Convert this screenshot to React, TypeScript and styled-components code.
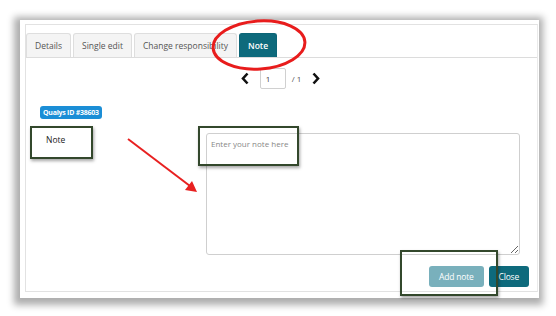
import styled, { createGlobalStyle } from 'styled-components';

const GlobalStyle = createGlobalStyle`
  html, body {
    margin: 0;
    padding: 0;
    background: #ffffff;
    font-family: "Open Sans", "Liberation Sans", sans-serif;
  }
`

const Page = styled.div`
  width: 556px;
  height: 316px;
  padding: 20px 17px 18px 20px;
  box-sizing: border-box;
  position: relative;
  overflow: hidden;
`
const Card = styled.div`
  height: 100%;
  background: #fff;
  box-shadow: -1px 2px 7px 5px rgba(0, 0, 0, 0.32);
  padding: 4px 1px 6px 5px;
  box-sizing: border-box;
`
const Panel = styled.div`
  height: 100%;
  border: 1px solid #e2e2e2;
  border-right-color: #eaeaea;
  box-sizing: border-box;
  display: flex;
  flex-direction: column;
`
const TabBar = styled.div`
  display: flex;
  gap: 2px;
  padding: 8px 0 0 0;
  border-bottom: 1px solid #dcdcdc;
`
const Tab = styled.div<{ $active?: boolean }>`
  height: 23px;
  padding: 0 8px;
  display: flex;
  align-items: center;
  font-size: 8.5px;
  border: 1px solid ${p => (p.$active ? '#0d6577' : '#dedede')};
  border-bottom: none;
  border-radius: 3px 3px 0 0;
  background: ${p => (p.$active ? '#0e6a7c' : '#f4f4f4')};
  color: ${p => (p.$active ? '#fff' : '#555')};
  font-weight: ${p => (p.$active ? 600 : 400)};
`
const Pager = styled.div`
  display: flex;
  justify-content: center;
  align-items: center;
  gap: 6px;
  margin-top: 10px;
  padding-right: 2px;
`
const Chevron = styled.svg`
  width: 10px;
  height: 13px;
  margin: 0 4px;
`
const PageInput = styled.div`
  width: 26px;
  height: 21px;
  border: 1px solid #d0d0d0;
  border-radius: 2px;
  box-sizing: border-box;
  font-size: 8px;
  color: #444;
  display: flex;
  align-items: center;
  padding-left: 5px;
`
const PageTotal = styled.span`
  font-size: 8px;
  color: #555;
`
const Body = styled.div`
  flex: 1;
  display: flex;
  flex-direction: column;
  padding: 17px 8px 0 14px;
`
const Badge = styled.span`
  align-self: flex-start;
  background: #1b8ed6;
  color: #fff;
  font-size: 7px;
  font-weight: 700;
  padding: 2px 3px;
  border-radius: 3px;
  letter-spacing: -0.25px;
`
const FieldRow = styled.div`
  display: flex;
  margin-top: 14px;
`
const FieldLabel = styled.div`
  width: 166px;
  flex-shrink: 0;
  padding: 1px 0 0 6px;
  box-sizing: border-box;
  font-size: 8.5px;
  color: #222;
`
const NoteArea = styled.textarea`
  width: 314px;
  height: 122px;
  box-sizing: border-box;
  border: 1px solid #cfcfcf;
  border-radius: 3px;
  padding: 4px 4px;
  font-family: "Open Sans", "Liberation Sans", sans-serif;
  font-size: 8px;
  resize: vertical;
  &::placeholder {
    color: #888;
  }
`
const Footer = styled.div`
  display: flex;
  justify-content: flex-end;
  gap: 5px;
  margin-top: 11px;
`
const Button = styled.button<{ $muted?: boolean }>`
  height: 21px;
  border: none;
  border-radius: 3px;
  padding: 0 10px;
  font-family: "Open Sans", "Liberation Sans", sans-serif;
  font-size: 8.5px;
  letter-spacing: -0.2px;
  color: #fff;
  background: ${p => (p.$muted ? '#79b0bc' : '#0e6a7c')};
`
const Highlight = styled.div`
  position: absolute;
  border: 2px solid #33482c;
  box-shadow: 1px 2px 3px rgba(0, 0, 0, 0.35);
  box-sizing: border-box;
`
const Overlay = styled.svg`
  position: absolute;
  left: 0;
  top: 0;
  pointer-events: none;
`

export default function App() {
  return (
    <Page>
      <GlobalStyle />
      <Card>
        <Panel>
          <TabBar>
            <Tab>Details</Tab>
            <Tab>Single edit</Tab>
            <Tab>Change responsibility</Tab>
            <Tab $active>Note</Tab>
          </TabBar>
          <Pager>
            <Chevron viewBox="0 0 10 13">
              <path d="M7.5 1.5 L3 6.5 L7.5 11.5" fill="none" stroke="#111" strokeWidth="2.6" />
            </Chevron>
            <PageInput>1</PageInput>
            <PageTotal>/ 1</PageTotal>
            <Chevron viewBox="0 0 10 13">
              <path d="M2.5 1.5 L7 6.5 L2.5 11.5" fill="none" stroke="#111" strokeWidth="2.6" />
            </Chevron>
          </Pager>
          <Body>
            <Badge>Qualys ID #38603</Badge>
            <FieldRow>
              <FieldLabel>Note</FieldLabel>
              <NoteArea placeholder="Enter your note here" />
            </FieldRow>
            <Footer>
              <Button $muted>Add note</Button>
              <Button>Close</Button>
            </Footer>
          </Body>
        </Panel>
      </Card>

      <Highlight style={{ left: 30, top: 126, width: 63, height: 33 }} />
      <Highlight style={{ left: 198, top: 126, width: 101, height: 40 }} />
      <Highlight style={{ left: 400, top: 250, width: 98, height: 46 }} />

      <Overlay width="556" height="316" viewBox="0 0 556 316">
        <ellipse cx="259" cy="45" rx="46" ry="24" fill="none" stroke="#e81c1c" strokeWidth="3" transform="rotate(-4 259 45)" />
        <line x1="128" y1="139" x2="190" y2="186" stroke="#e82020" strokeWidth="2" />
        <polygon points="197,192 185,190 192,181" fill="#e82020" />
      </Overlay>
    </Page>
  )
}
